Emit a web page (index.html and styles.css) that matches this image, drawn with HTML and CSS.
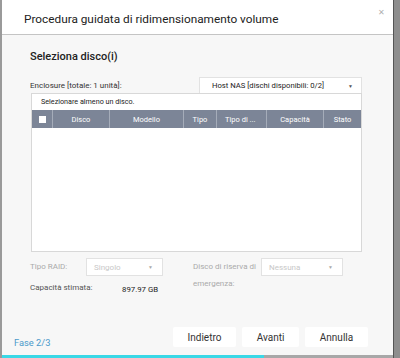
FILE: index.html
```html
<!DOCTYPE html>
<html lang="it">
<head>
  <meta charset="UTF-8" />
  <title>Procedura guidata di ridimensionamento volume</title>
  <link rel="stylesheet" href="styles.css">
</head>
<body>
  <div class="dialog">
    <!-- HEADER -->
    <div class="dialog-head">
      <span class="title">Procedura guidata di ridimensionamento volume</span>
      <span class="close">&#x2715;</span>
    </div>

    <!-- BODY -->
    <div class="dialog-body">
      <h2>Seleziona disco(i)</h2>

      <div class="enclosure-row">
        <span class="label">Enclosure [totale: 1 unità]:</span>
        <div class="select">
          <span>Host NAS [dischi disponibili: 0/2]</span>
          <span class="arrow">&#x25BC;</span>
        </div>
      </div>

      <div class="disk-table">
        <div class="hint">Selezionare almeno un disco.</div>
        <div class="thead">
          <div class="th col-check"><span class="checkbox"></span></div>
          <div class="th col-disk">Disco</div>
          <div class="th col-model">Modello</div>
          <div class="th col-type">Tipo</div>
          <div class="th col-kind">Tipo di ...</div>
          <div class="th col-cap">Capacità</div>
          <div class="th col-state">Stato</div>
        </div>
      </div>

      <div class="options">
        <div class="opt-col">
          <div class="opt raid">
            <span class="label muted">Tipo RAID:</span>
            <div class="select disabled raid-select">
              <span>Singolo</span>
              <span class="arrow">&#x25BC;</span>
            </div>
          </div>
          <div class="capacity">
            <span class="label">Capacità stimata:</span>
            <span class="value">897.97 GB</span>
          </div>
        </div>
        <div class="opt spare">
          <span class="label muted">Disco di riserva di<br>emergenza:</span>
          <div class="select disabled spare-select">
            <span>Nessuna</span>
            <span class="arrow">&#x25BC;</span>
          </div>
        </div>
      </div>
    </div>

    <!-- FOOTER -->
    <div class="dialog-foot">
      <span class="step">Fase 2/3</span>
      <div class="buttons">
        <button class="btn-back">Indietro</button>
        <button class="btn-next">Avanti</button>
        <button class="btn-cancel">Annulla</button>
      </div>
    </div>
    <div class="progress"><div class="progress-fill"></div></div>
  </div>
</body>
</html>
```

FILE: styles.css
```css
* {
  box-sizing: border-box;
}
body, html {
  margin: 0;
  height: 100%;
}
body {
  background: #8e8e8e;
  font-family: Roboto, 'Liberation Sans', sans-serif;
  color: #444;
  overflow: hidden;
}

.dialog {
  width: 394px;
  height: 358px;
  background: #f7f7f7;
  border-left: 2px solid #9a9a9a;
  border-right: 1px solid #555;
  display: flex;
  flex-direction: column;
}

.dialog-head {
  height: 35px;
  flex: none;
  background: #fff;
  border-bottom: 1px solid #c4c4c4;
  display: flex;
  align-items: center;
  justify-content: space-between;
  padding: 0 8px 0 22px;
}
.title {
  font-size: 11.8px;
  color: #222;
  margin-top: 4px;
}
.close {
  font-size: 8px;
  color: #b0b0b0;
  align-self: flex-start;
  margin-top: 8px;
}

.dialog-body {
  flex: 1;
  padding: 0 31px 0 28px;
}
h2 {
  font-size: 11px;
  font-weight: 500;
  color: #222;
  margin: 15px 0 0;
  height: 13px;
  line-height: 13px;
}

.label {
  font-size: 8px;
  color: #444;
  white-space: nowrap;
}
.label.muted {
  color: #aaa;
}

.enclosure-row {
  display: flex;
  justify-content: space-between;
  align-items: center;
  margin-top: 14px;
}
.enclosure-row .label {
  color: #333;
}

.select {
  width: 163px;
  height: 16px;
  background: #fff;
  border: 1px solid #e2e2e2;
  border-bottom: none;
  display: flex;
  align-items: center;
  justify-content: space-between;
  padding: 0 8px 0 12px;
  font-size: 7.7px;
  color: #222;
  white-space: nowrap;
}
.select .arrow {
  font-size: 5px;
  color: #555;
}
.select.disabled {
  height: 18px;
  border-bottom: 1px solid #e2e2e2;
  color: #c8c8c8;
  font-size: 8px;
  padding: 0 9px 0 7px;
}
.select.disabled .arrow {
  color: #aaa;
}
.raid-select {
  width: 77px;
}
.spare-select {
  width: 82px;
}

.disk-table {
  height: 159px;
  background: #fff;
  border: 1px solid #d8d8d8;
  margin-left: 1px;
}
.hint {
  height: 16px;
  line-height: 16px;
  font-size: 7.2px;
  color: #222;
  padding-left: 9px;
}
.thead {
  display: flex;
  height: 18px;
  background: #7c8597;
}
.th {
  color: #fff;
  font-size: 7.5px;
  display: flex;
  align-items: center;
  justify-content: center;
  border-left: 1px solid #a5acb9;
}
.th:first-child {
  border-left: none;
}
.col-check { width: 20px; }
.col-disk { width: 57px; }
.col-model { width: 74px; }
.col-type { width: 33px; }
.col-kind { width: 50px; justify-content: flex-start; padding-left: 8px; }
.col-cap { width: 57px; }
.col-state { flex: 1; }
.checkbox {
  width: 7px;
  height: 7px;
  background: #fff;
}

.options {
  display: flex;
  margin-top: 6px;
}
.opt-col {
  width: 163px;
}
.opt {
  display: flex;
  align-items: flex-start;
}
.opt .label {
  line-height: 18px;
}
.raid .label {
  width: 56px;
}
.spare .label {
  width: 68px;
  line-height: 17px;
}

.capacity {
  display: flex;
  align-items: center;
  margin-top: 2px;
  height: 18px;
}
.capacity .label {
  width: 92px;
  color: #555;
}
.capacity .value {
  font-size: 7.8px;
  color: #222;
  margin-top: 4px;
}

.dialog-foot {
  flex: none;
  height: 35px;
  display: flex;
  justify-content: space-between;
  align-items: flex-start;
  padding: 0 25px 0 12px;
}
.step {
  font-size: 9.3px;
  color: #4a9acb;
  margin-top: 17px;
}
.buttons {
  display: flex;
  gap: 6px;
  margin-top: 7px;
}
button {
  font-family: inherit;
  font-size: 10px;
  color: #333;
  background: #fff;
  border: none;
  border-radius: 2px;
  height: 20px;
  padding: 0;
}
.btn-back { width: 63px; }
.btn-next { width: 57px; }
.btn-cancel { width: 63px; }

.progress {
  flex: none;
  height: 3px;
  background: #a8a8a8;
}
.progress-fill {
  width: 67%;
  height: 100%;
  background: #3ad8e6;
}
```
